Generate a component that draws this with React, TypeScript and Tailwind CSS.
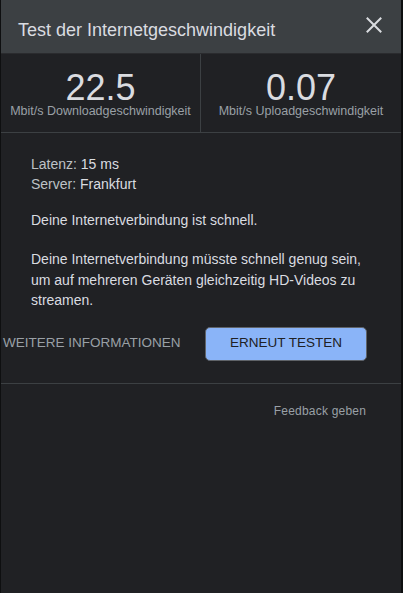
const font = { fontFamily: '"Liberation Sans", Arial, sans-serif' };

function CloseIcon() {
  return (
    <svg width="16" height="16" viewBox="0 0 16 16" className="block">
      <path d="M1.5 1.5 L14.5 14.5 M14.5 1.5 L1.5 14.5" stroke="#dadce0" strokeWidth="2" strokeLinecap="square" />
    </svg>
  );
}

function Stat({ value, label, divider }: { value: string; label: string; divider?: boolean }) {
  return (
    <div className={"flex flex-col items-center pt-[18px] " + (divider ? "border-r border-[#3c4043]" : "")}>
      <span className="text-[36px] leading-[32px] text-[#dadce0]">{value}</span>
      <span className="mt-[1px] text-[12.5px] leading-[12px] text-[#9aa0a6]">{label}</span>
    </div>
  );
}

export default function App() {
  return (
    <div className="flex h-[593px] w-[403px] bg-[#0e0f10]" style={font}>
      {/* panel */}
      <section className="ml-[1px] flex h-full w-[400px] flex-col bg-[#202124]">
        <header className="flex h-[54px] shrink-0 items-start justify-between border-b border-[#2a2b2e] bg-[#3c4043] pl-[17px] pr-[19px]">
          <h1 className="pt-[19px] text-[18px] leading-[22px] text-[#dadce0]">Test der Internetgeschwindigkeit</h1>
          <div className="pt-[17px]">
            <CloseIcon />
          </div>
        </header>

        <div className="grid h-[79px] shrink-0 grid-cols-2 border-b border-[#3c4043]">
          <Stat value="22.5" label="Mbit/s Downloadgeschwindigkeit" divider />
          <Stat value="0.07" label="Mbit/s Uploadgeschwindigkeit" />
        </div>

        <div className="px-[30px] pt-[21px] text-[14px] text-[#dadce0]">
          <p className="leading-[20px]">
            <span className="text-[#bdc1c6]">Latenz:</span> 15 ms
          </p>
          <p className="leading-[20px]">
            <span className="text-[#bdc1c6]">Server:</span> Frankfurt
          </p>
          <p className="mt-[16px] leading-[20px]">Deine Internetverbindung ist schnell.</p>
          <p className="mt-[19px] leading-[20.5px]">
            Deine Internetverbindung müsste schnell genug sein, um auf mehreren Geräten gleichzeitig HD-Videos zu streamen.
          </p>
        </div>

        <div className="mt-[16px] flex items-center">
          <button className="pl-[2px] text-[13.5px] uppercase text-[#9aa0a6]">Weitere Informationen</button>
          <button className="ml-auto mr-[34px] h-[34px] w-[162px] rounded-[5px] border border-[#5f6368] bg-[#8ab4f8] text-[13.5px] uppercase text-[#202124]">
            Erneut testen
          </button>
        </div>

        <div className="mt-[22px] border-t border-[#3c4043]" />

        <div className="flex justify-end pr-[35px] pt-[20px]">
          <span className="text-[12px] leading-[14px] tracking-[0.2px] text-[#9aa0a6]">Feedback geben</span>
        </div>
      </section>
    </div>
  );
}
